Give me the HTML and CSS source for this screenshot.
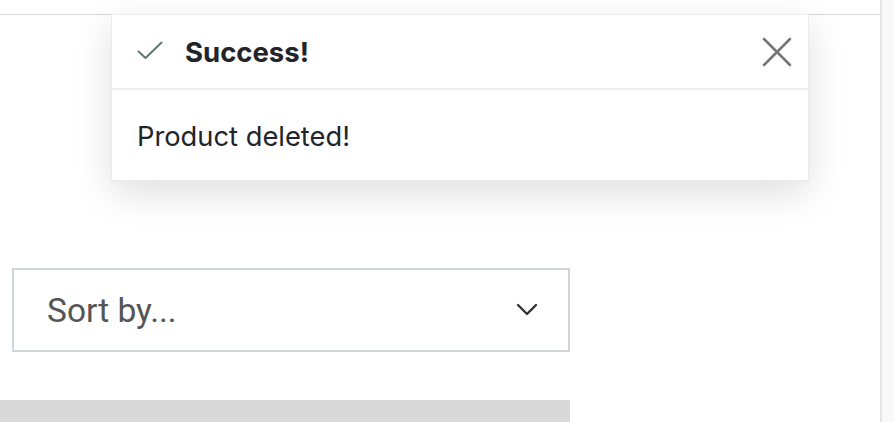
FILE: index.html
```html
<!DOCTYPE html>
<html lang="en">
<head>
<meta charset="utf-8">
<title>Products</title>
<link rel="stylesheet" href="styles.css">
</head>
<body>
<div class="page">
  <main class="main">
    <header class="topbar"></header>
    <section class="content">
      <div class="select">
        <span class="select-label">Sort by...</span>
        <svg class="chevron" width="22" height="13" viewBox="0 0 22 13" aria-hidden="true">
          <path d="M2 2 L11 11 L20 2" fill="none" stroke="#2f3237" stroke-width="2.4" stroke-linecap="round" stroke-linejoin="round"/>
        </svg>
      </div>
      <div class="placeholder-bar"></div>
    </section>
  </main>
  <aside class="scrolltrack"></aside>
</div>

<div class="toast" role="alert">
  <div class="toast-header">
    <svg class="check" width="26" height="19" viewBox="0 0 26 19" aria-hidden="true">
      <path d="M1.5 10.5 L8.5 17 L24.5 1.5" fill="none" stroke="#5f7876" stroke-width="2" stroke-linecap="round" stroke-linejoin="round"/>
    </svg>
    <strong class="toast-title">Success!</strong>
    <button class="toast-close" aria-label="Close">
      <svg width="30" height="30" viewBox="0 0 30 30" aria-hidden="true">
        <path d="M2 2 L28 28 M28 2 L2 28" fill="none" stroke="#777" stroke-width="2.6" stroke-linecap="round"/>
      </svg>
    </button>
  </div>
  <div class="toast-body">Product deleted!</div>
</div>
</body>
</html>
```

FILE: styles.css
```css
* { box-sizing: border-box; }

html, body {
  margin: 0;
  padding: 0;
  background: #fff;
}

body {
  width: 894px;
  height: 422px;
  overflow: hidden;
  font-family: Inter, "Noto Sans", sans-serif;
  color: #212529;
}

.page {
  display: flex;
  height: 422px;
}

.main {
  width: 880px;
  display: flex;
  flex-direction: column;
}

.topbar {
  height: 15px;
  border-bottom: 1px solid #d6d6d6;
}

.content {
  padding-top: 253px;
  display: flex;
  flex-direction: column;
}

.select {
  margin-left: 12px;
  width: 558px;
  height: 84px;
  border: 2px solid #d0d5db;
  display: flex;
  align-items: center;
  justify-content: space-between;
  padding: 0 30px 0 33px;
  background: #fff;
}

.select-label {
  font-family: Roboto, "Liberation Sans", sans-serif;
  font-size: 33.5px;
  color: #555;
}

.chevron { display: block; margin-top: -2px; }

.placeholder-bar {
  margin-top: 48px;
  width: 570px;
  height: 22px;
  background: #d9d9d9;
}

.scrolltrack {
  width: 14px;
  border-left: 2px solid #e6e6e6;
  background: #f9f9f9;
}

.toast {
  position: absolute;
  left: 111px;
  top: 14px;
  width: 698px;
  height: 167px;
  background: #fff;
  border: 1px solid rgba(0, 0, 0, 0.08);
  box-shadow: 0 12px 36px rgba(0, 0, 0, 0.13);
}

.toast-header {
  height: 75px;
  display: flex;
  align-items: center;
  padding: 0 16px 0 25px;
  border-bottom: 2px solid #eeeeee;
}

.check { display: block; margin-top: -2px; }

.toast-title {
  margin-left: 22px;
  font-size: 27.5px;
  font-weight: 700;
  color: #212529;
  flex: 1;
}

.toast-close {
  border: 0;
  background: none;
  padding: 0;
  width: 30px;
  height: 30px;
  cursor: pointer;
}

.toast-close svg { display: block; }

.toast-body {
  padding: 30px 25px 26px;
  font-size: 27.3px;
  color: #212529;
}
```
